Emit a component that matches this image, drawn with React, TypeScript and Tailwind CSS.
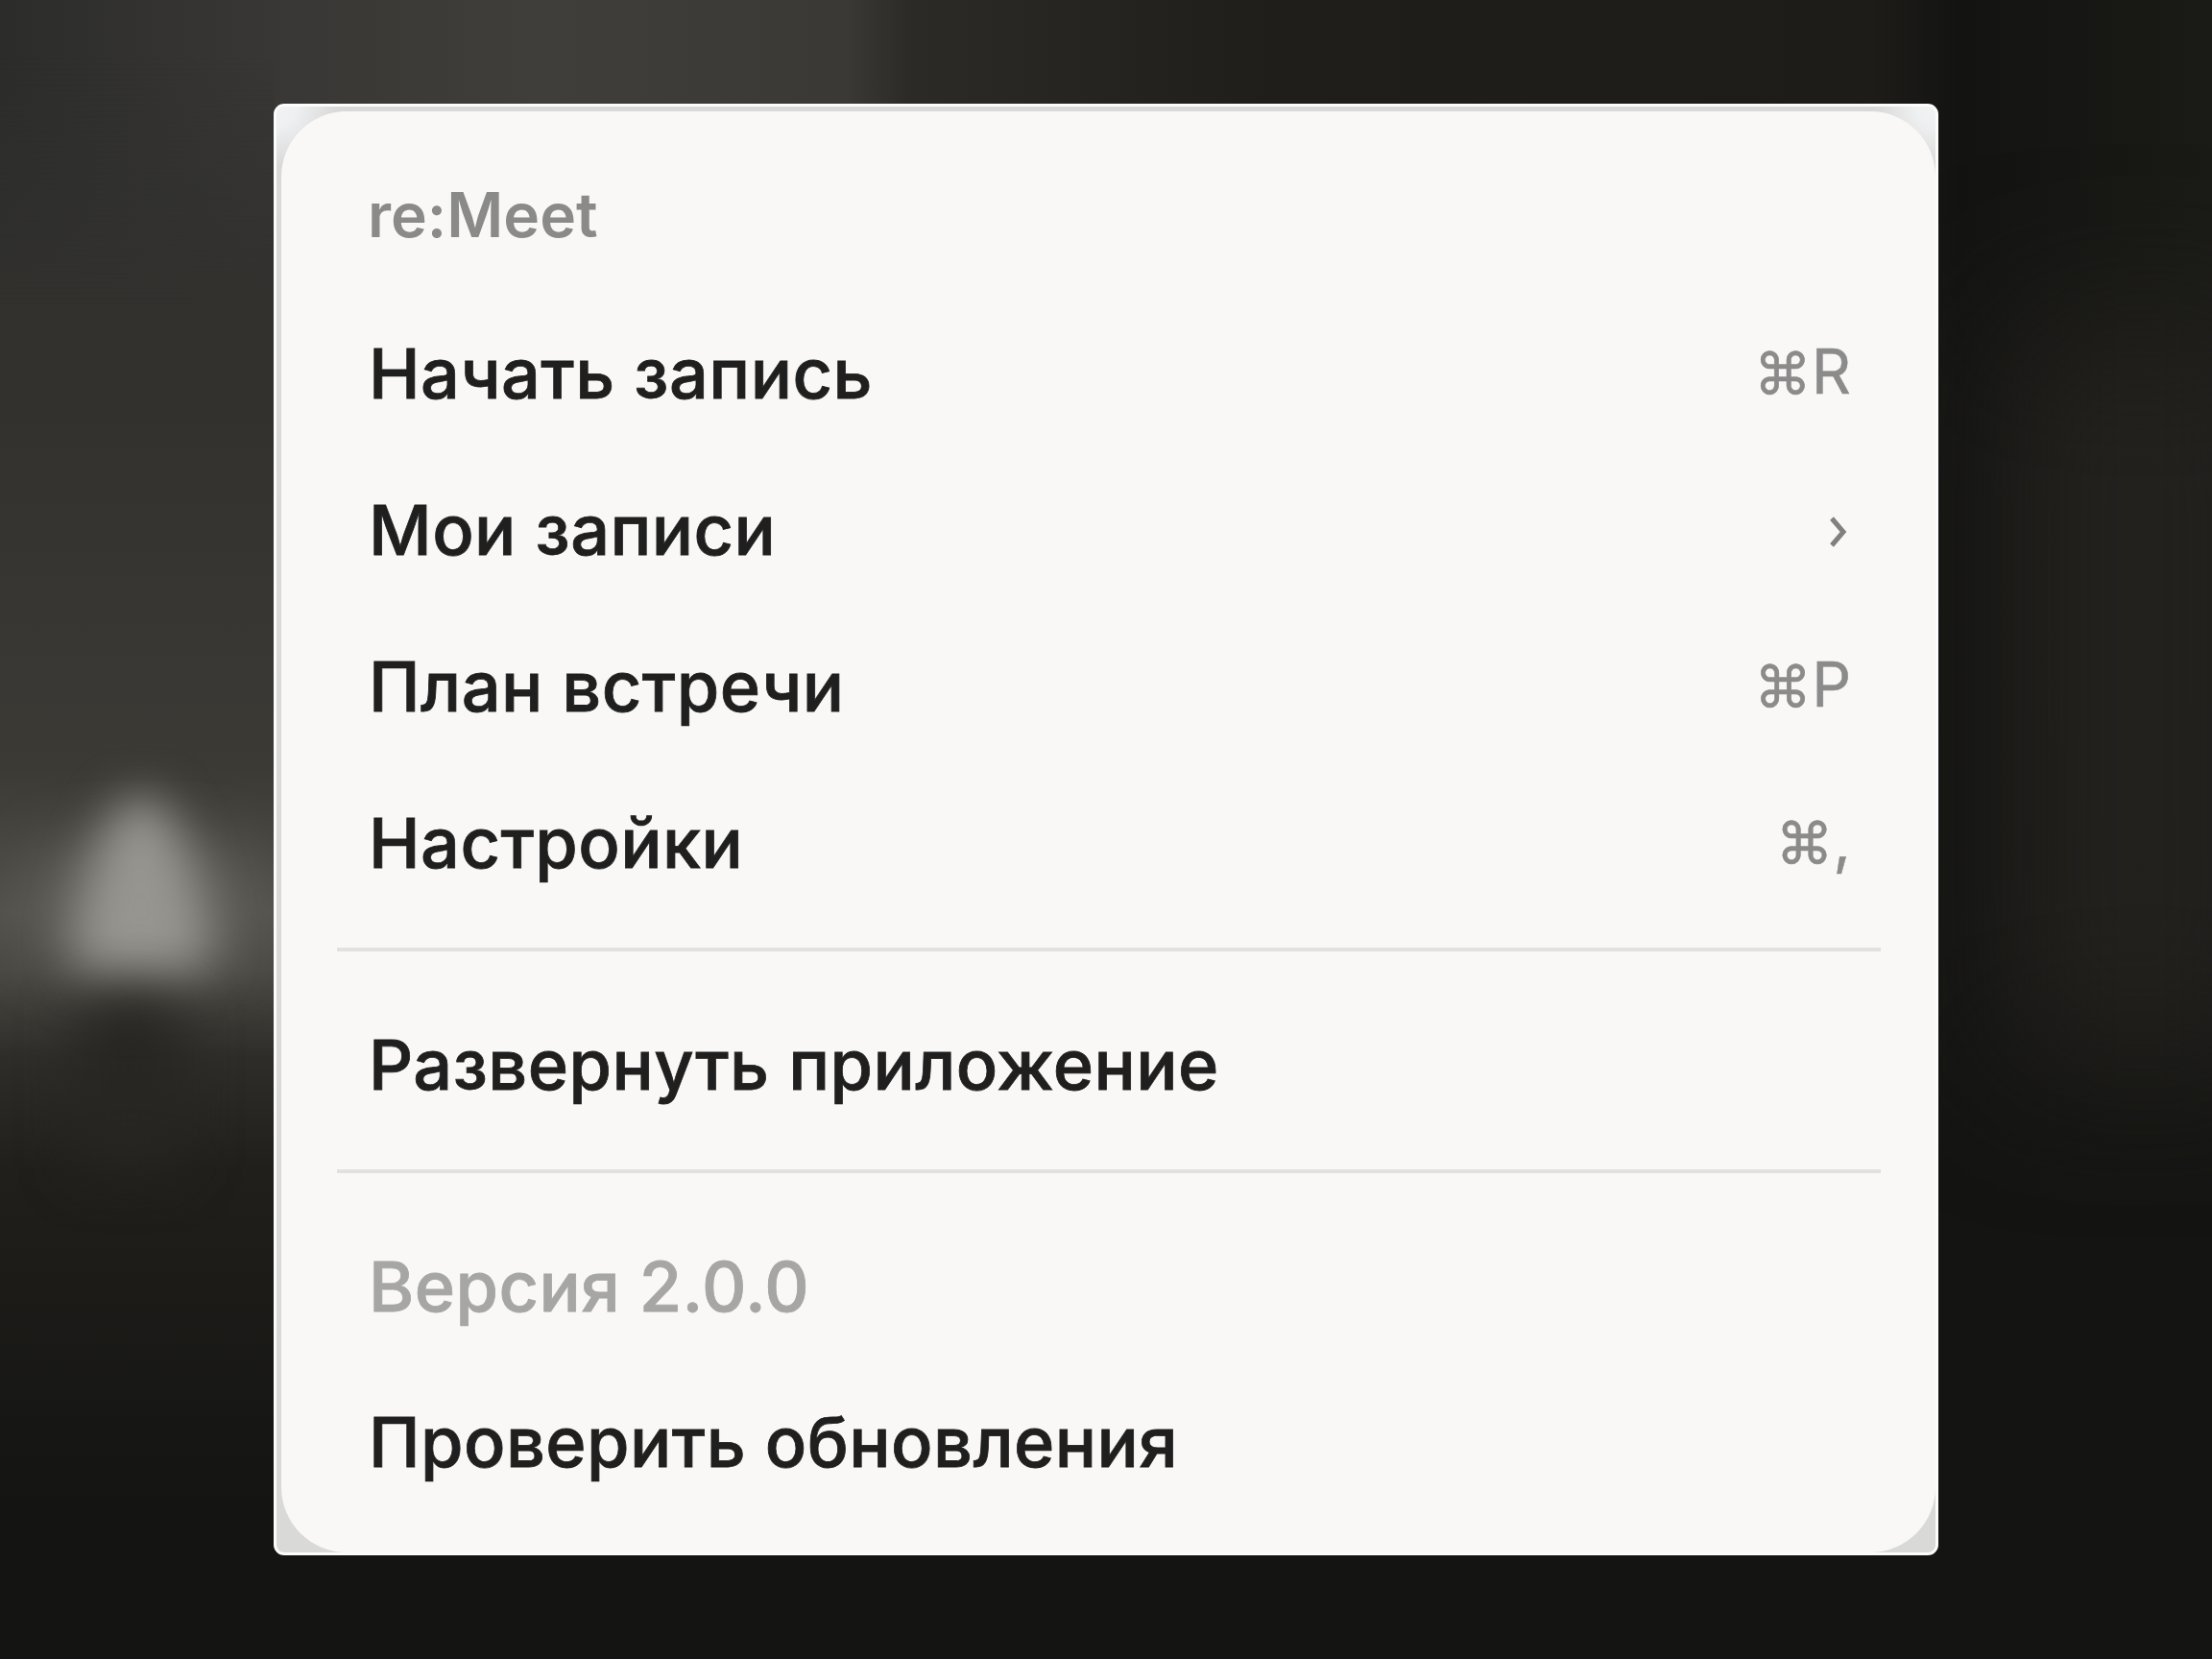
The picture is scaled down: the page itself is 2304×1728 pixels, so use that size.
export default function App() {
  const font = "[font-family:Inter,'Liberation_Sans',sans-serif]";
  const Row = ({ label, right, muted }: { label: string; right?: React.ReactNode; muted?: boolean }) => (
    <div className="flex h-[163px] items-center justify-between pl-[33px] pr-[31px]">
      <span className={`text-[72px] font-medium tracking-[0.45px] [-webkit-text-stroke:0.8px] ${muted ? "text-[#a6a6a5]" : "text-[#1f1f1f]"}`}>{label}</span>
      {right}
    </div>
  );
  const Key = ({ glyph, mark }: { glyph: string; mark: string }) => (
    <span className="mb-[3px] flex items-baseline text-[#8b8b8b] [-webkit-text-stroke:0.5px]">
      <span className="text-[60px] font-normal">{mark}</span>
      <span className="text-[64px] font-normal">{glyph}</span>
    </span>
  );
  const Line = () => <div className="h-[4px] bg-[#e2e1df]" />;
  return (
    <div className={`relative h-[1728px] w-[2304px] overflow-hidden bg-[#161614] pl-[285px] pt-[108px] ${font}`}>
      {/* blurred backdrop */}
      <div className="absolute inset-0 bg-[linear-gradient(90deg,#2c2c2a_0px,#383735_285px,#3f3e3a_560px,#3a3936_880px,#2b2a27_950px,#282723_1050px,#1f1e1b_1320px,#1d1c19_1950px,#131311_2040px,#1a1a17_2304px)]" />
      <div className="absolute inset-0 bg-[linear-gradient(180deg,rgba(22,22,20,0)_0px,rgba(22,22,20,0)_700px,rgba(20,20,18,1)_1300px)]" />
      <div className="absolute left-0 top-0 h-[1620px] w-[285px] bg-[linear-gradient(180deg,#30302e_120px,#32312e_420px,#3b3a35_800px,#53514b_950px,#4b4943_1010px,#2e2d29_1100px,#201f1c_1220px,#141412_1560px)] [mask-image:linear-gradient(180deg,transparent_60px,black_320px)]" />
      <div className="absolute left-[30px] top-[880px] h-[130px] w-[240px] rounded-[60px] bg-[#5f5d57] blur-[30px]" />
      <div className="absolute left-0 top-0 h-[1728px] w-[285px] blur-[24px]">
        <div className="absolute left-[74px] top-[832px] h-[180px] w-[146px] bg-[#969590] [clip-path:polygon(38%_0%,62%_0%,80%_25%,92%_55%,100%_88%,88%_100%,12%_100%,0%_88%,8%_55%,20%_25%)]" />
      </div>
      <div className="absolute left-[85px] top-[1045px] h-[170px] w-[100px] bg-[#272622] blur-[30px]" />
      <div className="absolute left-[2100px] top-[340px] h-[760px] w-[260px] bg-[#23221f] blur-[80px]" />

      {/* card */}
      <div className="relative h-[1512px] w-[1734px] overflow-hidden rounded-[11px] border-[3px] border-[#fcfcfc] bg-[radial-gradient(circle_at_100%_0%,#f1f2f3_0px,#eff0f1_20px,rgba(216,216,215,0)_62px),radial-gradient(circle_at_0%_0%,#f1f2f4_0px,#eff0f2_20px,rgba(216,216,215,0)_62px),linear-gradient(#d9d9d8,#d9d9d8)] pl-[5px] pt-[5px]">
        <div className="h-full w-full rounded-[68px] bg-[#f9f8f6] pl-[58px] pr-[57px] blur-[0.7px]">
          <div className="flex h-[191px] items-end pb-[35px] pl-[32px]">
            <span className="text-[64px] font-semibold text-[#8a8a89]">re:Meet</span>
          </div>
          <Row label="Начать запись" right={<Key mark="⌘" glyph="R" />} />
          <Row
            label="Мои записи"
            right={
              <svg width="24" height="34" viewBox="0 0 24 34" fill="none" className="mr-[2px] mt-[5px]">
                <path d="M6 3 L18 17 L6 31" stroke="#808080" strokeWidth="5" />
              </svg>
            }
          />
          <Row label="План встречи" right={<Key mark="⌘" glyph="P" />} />
          <Row label="Настройки" right={<Key mark="⌘" glyph="," />} />
          <div className="mt-[28px]"><Line /></div>
          <div className="mt-[36px]"><Row label="Развернуть приложение" /></div>
          <div className="mt-[28px]"><Line /></div>
          <div className="mt-[36px]"><Row label="Версия 2.0.0" muted /></div>
          <div className="-mt-px"><Row label="Проверить обновления" /></div>
        </div>
      </div>
    </div>
  );
}
